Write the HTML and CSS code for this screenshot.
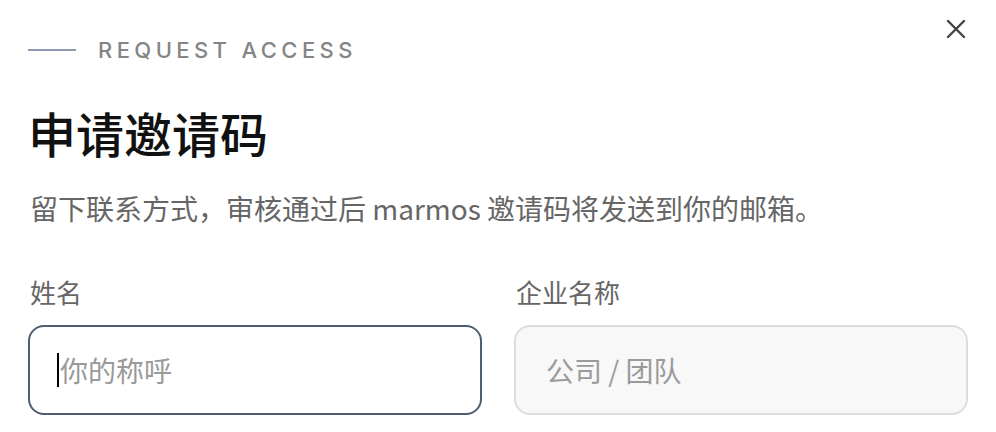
FILE: index.html
```html
<!DOCTYPE html>
<html lang="zh-CN">
<head>
<meta charset="utf-8">
<title>申请邀请码</title>
<link rel="stylesheet" href="styles.css">
</head>
<body>
<div class="dialog">
  <button class="close" aria-label="关闭">
    <svg width="22" height="22" viewBox="0 0 22 22"><path d="M3 3 L19 19 M19 3 L3 19" stroke="#444" stroke-width="2.4" stroke-linecap="round" fill="none"/></svg>
  </button>
  <div class="eyebrow"><span class="rule"></span><span class="eyebrow-text">Request access</span></div>
  <h1 class="title">申请邀请码</h1>
  <p class="lead">留下联系方式，审核通过后 marmos 邀请码将发送到你的邮箱。</p>
  <div class="fields">
    <label class="field">
      <span class="label">姓名</span>
      <span class="input-wrap">
        <input class="input input-focus" type="text" placeholder="你的称呼">
        <span class="caret"></span>
      </span>
    </label>
    <label class="field">
      <span class="label">企业名称</span>
      <span class="input-wrap">
        <input class="input input-idle" type="text" placeholder="公司 / 团队">
      </span>
    </label>
  </div>
</div>
</body>
</html>
```
FILE: styles.css
```css
* { box-sizing: border-box; }
html, body { margin: 0; padding: 0; background: #ffffff; }
body {
  font-family: "Inter", "Noto Sans CJK SC", sans-serif;
  color: #222;
  overflow: hidden;
}
.dialog {
  position: relative;
  width: 996px;
  height: 432px;
  padding: 36px 28px 0 28px;
}
.close {
  position: absolute;
  top: 18px;
  right: 29px;
  width: 22px;
  height: 22px;
  padding: 0;
  border: 0;
  background: transparent;
  display: flex;
}
.eyebrow {
  display: flex;
  align-items: center;
  gap: 22px;
  height: 28px;
}
.rule {
  width: 48px;
  height: 2px;
  background: #8b9bb0;
}
.eyebrow-text {
  font-family: "Inter", "Liberation Sans", sans-serif;
  font-size: 22px;
  font-weight: 500;
  letter-spacing: 4.4px;
  text-transform: uppercase;
  color: #858585;
  line-height: 28px;
}
.title {
  margin: 38px 0 0 0;
  font-family: "Noto Sans CJK SC", serif;
  font-weight: 500;
  font-size: 48px;
  line-height: 60px;
  color: #111;
}
.lead {
  margin: 26px 0 0 2px;
  font-family: "Noto Sans CJK SC", sans-serif;
  font-size: 28px;
  line-height: 40px;
  color: #666;
}
.fields {
  margin-top: 47px;
  display: grid;
  grid-template-columns: 1fr 1fr;
  gap: 32px;
}
.field {
  display: flex;
  flex-direction: column;
  gap: 16px;
}
.label {
  font-family: "Noto Sans CJK SC", sans-serif;
  font-size: 26px;
  line-height: 34px;
  color: #666;
  padding-left: 2px;
}
.input-wrap {
  position: relative;
  display: block;
}
.input {
  display: block;
  width: 100%;
  height: 90px;
  border-radius: 16px;
  padding: 0 30px;
  font-family: "Noto Sans CJK SC", sans-serif;
  font-size: 28px;
  color: #222;
  outline: none;
  caret-color: #000;
}
.input::placeholder { color: #9a9a9a; }
.input-focus {
  border: 2px solid #4d5f71;
  background: #fff;
}
.input-idle {
  border: 2px solid #dddddd;
  background: #f8f8f8;
}
.caret {
  position: absolute;
  left: 29px;
  top: 28px;
  width: 2px;
  height: 34px;
  background: #000;
}
```
